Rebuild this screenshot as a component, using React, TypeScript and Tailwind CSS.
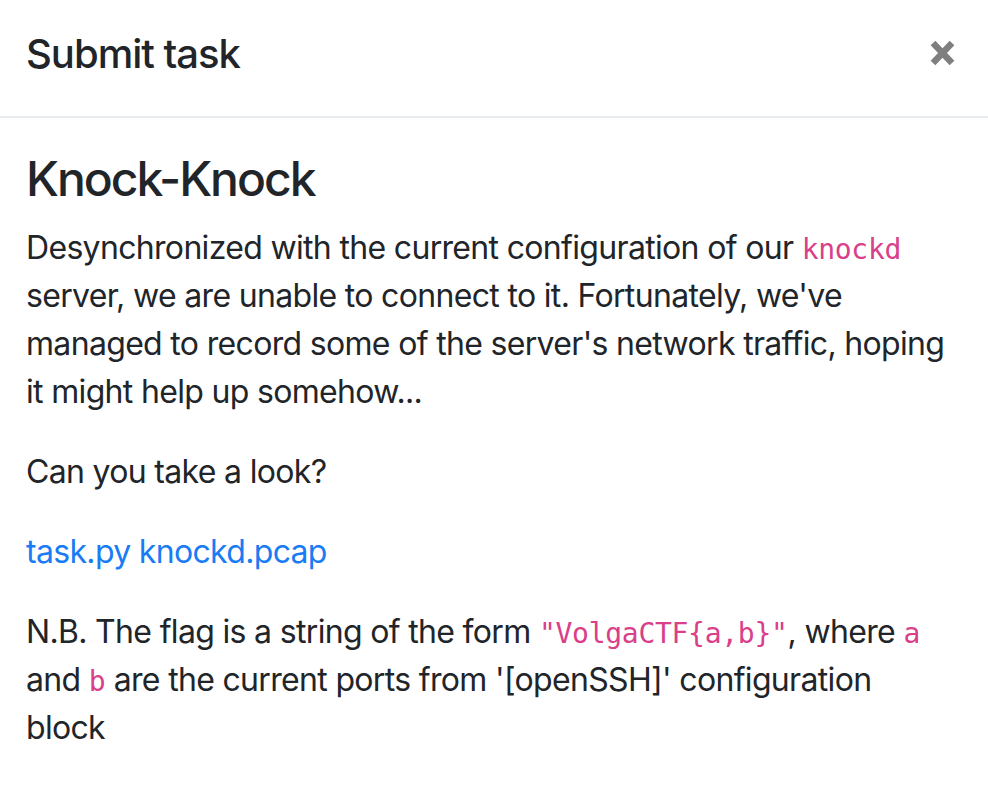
const sans = "font-['Inter','Noto_Sans',sans-serif]";

function Code({ children }: { children: string }) {
  return (
    <code className="font-['DejaVu_Sans_Mono','Liberation_Mono',monospace] text-[28px] leading-none tracking-[-0.01em] text-[#d9408a]">
      {children}
    </code>
  );
}

export default function App() {
  return (
    <div className={`${sans} h-[808px] w-[988px] overflow-hidden bg-white text-[#212529]`}>
      <header className="flex h-[118px] items-start justify-between border-b-2 border-[#e9ecef] pl-[26px] pr-[32px] pt-[24px]">
        <h5 className="text-[40px] font-medium leading-[60px] tracking-[-0.025em]">Submit task</h5>
        <button type="button" aria-label="Close" className="mt-[16px]">
          <svg width="27" height="26" viewBox="0 0 27 26">
            <path d="M4 3L23 23M23 3L4 23" stroke="#7f7f7f" strokeWidth="6.5" />
          </svg>
        </button>
      </header>

      <div className="pl-[26px] pr-[37px] pt-[32px] text-[32px] leading-[48px] tracking-[-0.021em]">
        <h4 className="mb-[16px] text-[48px] font-medium leading-[57.6px] tracking-[-0.042em]">Knock-Knock</h4>
        <p className="mb-[32px]">
          Desynchronized with the current configuration of our <Code>knockd</Code> server, we are unable to
          connect to it. Fortunately, we've managed to record some of the server's network traffic, hoping it
          might help up somehow...
        </p>
        <p className="mb-[32px]">Can you take a look?</p>
        <p className="mb-[32px]">
          <a href="#" className="text-[#1a7cf4]">task.py</a>{" "}
          <a href="#" className="text-[#1a7cf4]">knockd.pcap</a>
        </p>
        <p>
          N.B. The flag is a string of the form <Code>{'"VolgaCTF{a,b}"'}</Code>, where <Code>a</Code> and{" "}
          <Code>b</Code> are the current ports from '[openSSH]' configuration block
        </p>
      </div>
    </div>
  );
}
